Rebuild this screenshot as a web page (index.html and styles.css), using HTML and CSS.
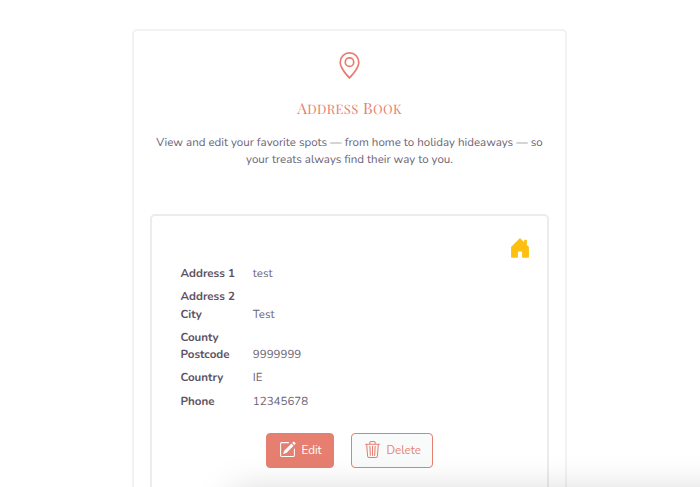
FILE: index.html
```
<!DOCTYPE html>
<html lang="en">
<head>
<meta charset="utf-8">
<title>Address Book</title>
<link rel="stylesheet" href="styles.css">
</head>
<body>
<main class="panel">
  <header class="intro">
    <svg class="pin" viewBox="0 0 16 16" fill="currentColor"><path d="M12.166 8.94c-.524 1.062-1.234 2.12-1.96 3.07A32 32 0 0 1 8 14.58a32 32 0 0 1-2.206-2.57c-.726-.95-1.436-2.008-1.96-3.07C3.304 7.867 3 6.862 3 6a5 5 0 0 1 10 0c0 .862-.305 1.867-.834 2.94M8 16s6-5.686 6-10A6 6 0 0 0 2 6c0 4.314 6 10 6 10"/><path d="M8 8a2 2 0 1 1 0-4 2 2 0 0 1 0 4m0 1a3 3 0 1 0 0-6 3 3 0 0 0 0 6"/></svg>
    <h1 class="title">A<span class="small">ddress</span> B<span class="small">ook</span></h1>
    <p class="lead">View and edit your favorite spots — from home to holiday hideaways — so<br>your treats always find their way to you.</p>
  </header>
  <section class="card">
    <svg class="home" viewBox="0 0 16 16" fill="currentColor"><path d="M6.5 14.5v-3.505c0-.245.25-.495.5-.495h2c.25 0 .5.25.5.5v3.5a.5.5 0 0 0 .5.5h4a.5.5 0 0 0 .5-.5v-7a.5.5 0 0 0-.146-.354L13 5.793V2.5a.5.5 0 0 0-.5-.5h-1a.5.5 0 0 0-.5.5v1.293L8.354 1.146a.5.5 0 0 0-.708 0l-6 6A.5.5 0 0 0 1.5 7.5v7a.5.5 0 0 0 .5.5h4a.5.5 0 0 0 .5-.5"/></svg>
    <dl class="details">
      <div class="row"><dt>Address 1</dt><dd>test</dd></div>
      <div class="row row-empty"><dt>Address 2</dt><dd></dd></div>
      <div class="row"><dt>City</dt><dd>Test</dd></div>
      <div class="row row-empty"><dt>County</dt><dd></dd></div>
      <div class="row"><dt>Postcode</dt><dd>9999999</dd></div>
      <div class="row"><dt>Country</dt><dd>IE</dd></div>
      <div class="row"><dt>Phone</dt><dd>12345678</dd></div>
    </dl>
    <div class="actions">
      <button class="btn btn-edit"><svg class="icon" viewBox="0 0 16 16" fill="currentColor"><path d="M15.502 1.94a.5.5 0 0 1 0 .706L14.459 3.69l-2-2L13.502.646a.5.5 0 0 1 .707 0l1.293 1.293zm-1.75 2.456-2-2L4.939 9.21a.5.5 0 0 0-.121.196l-.805 2.414a.25.25 0 0 0 .316.316l2.414-.805a.5.5 0 0 0 .196-.12l6.813-6.814z"/><path fill-rule="evenodd" d="M1 13.5A1.5 1.5 0 0 0 2.5 15h11a1.5 1.5 0 0 0 1.5-1.5v-6a.5.5 0 0 0-1 0v6a.5.5 0 0 1-.5.5h-11a.5.5 0 0 1-.5-.5v-11a.5.5 0 0 1 .5-.5H9a.5.5 0 0 0 0-1H2.5A1.5 1.5 0 0 0 1 2.5z"/></svg><span>Edit</span></button>
      <button class="btn btn-delete"><svg class="icon" viewBox="0 0 16 16" fill="currentColor"><path d="M6.5 1h3a.5.5 0 0 1 .5.5v1H6v-1a.5.5 0 0 1 .5-.5M11 2.5v-1A1.5 1.5 0 0 0 9.5 0h-3A1.5 1.5 0 0 0 5 1.5v1H1.5a.5.5 0 0 0 0 1h.538l.853 10.66A2 2 0 0 0 4.885 16h6.23a2 2 0 0 0 1.994-1.84l.853-10.66h.538a.5.5 0 0 0 0-1zm1.958 1-.846 10.58a1 1 0 0 1-.997.92h-6.23a1 1 0 0 1-.997-.92L3.042 3.5zm-7.487 1a.5.5 0 0 1 .528.47l.5 8.5a.5.5 0 0 1-.998.06L5 5.03a.5.5 0 0 1 .47-.53m5.058 0a.5.5 0 0 1 .47.53l-.5 8.5a.5.5 0 1 1-.998-.06l.5-8.5a.5.5 0 0 1 .528-.47M8 4.5a.5.5 0 0 1 .5.5v8.5a.5.5 0 0 1-1 0V5a.5.5 0 0 1 .5-.5"/></svg><span>Delete</span></button>
    </div>
  </section>
</main>
<div class="sheet-shadow"></div>
</body>
</html>
```
FILE: styles.css
```
* { box-sizing: border-box; }
html, body { height: 100%; }
body {
  margin: 0;
  overflow: hidden;
  background: #fff;
  color: #6c6475;
  font: 11.55px/17.4px Nunito, "Open Sans", sans-serif;
  text-rendering: geometricPrecision;
}
.panel {
  width: 435px;
  height: 458px;
  margin: 29px 0 0 132px;
  padding: 21px 16px 0;
  border: 2px solid #f1f2f2;
  border-bottom: 0;
  border-radius: 5px 5px 0 0;
  overflow: hidden;
}
.intro {
  display: flex;
  flex-direction: column;
  align-items: center;
  height: 162px;
  text-align: center;
}
.pin { width: 27px; height: 27px; flex: none; color: #e67f70; }
.title {
  margin: 18px 0 0;
  color: #e67f70;
  font: 500 15.5px/22px "Playfair Display SC", "Playfair Display", "Liberation Serif", serif;
  letter-spacing: 0.4px;
  white-space: nowrap;
}
.small { font-size: 13px; text-transform: uppercase; }
.lead { margin: 14px 0 0; white-space: nowrap; }
.card {
  display: flex;
  flex-direction: column;
  width: 399px;
  height: 380px;
  padding: 21px 16.5px 0 28px;
  border: 2px solid #ececee;
  border-radius: 5px;
}
.home { align-self: flex-end; width: 22px; height: 22px; color: #fdc010; }
.details { margin: 7px 0 0 0.5px; }
.row {
  display: grid;
  grid-template-columns: 72.3px 1fr;
  margin-bottom: 5.8px;
}
.row-empty { margin-bottom: 0; }
dt { font-weight: 700; color: #5d5363; }
dd { margin: 0; }
.actions { display: flex; gap: 17px; margin: 16px 0 0 86px; }
.btn {
  display: flex;
  align-items: center;
  gap: 5.5px;
  height: 35px;
  padding: 0 0 0 12px;
  border: 1px solid #e67f70;
  border-radius: 4px;
  font: inherit;
}
.icon { width: 17px; height: 17px; flex: none; margin-top: -1px; }
.btn-edit { width: 68px; background: #e67f70; color: #fff; }
.btn-delete { width: 82px; background: #f9fbfa; color: #e67f70; }
.sheet-shadow {
  position: fixed;
  top: 492px;
  left: 232px;
  width: 600px;
  height: 80px;
  box-shadow: 0 0 36px rgba(0, 0, 0, 0.18);
}
```
